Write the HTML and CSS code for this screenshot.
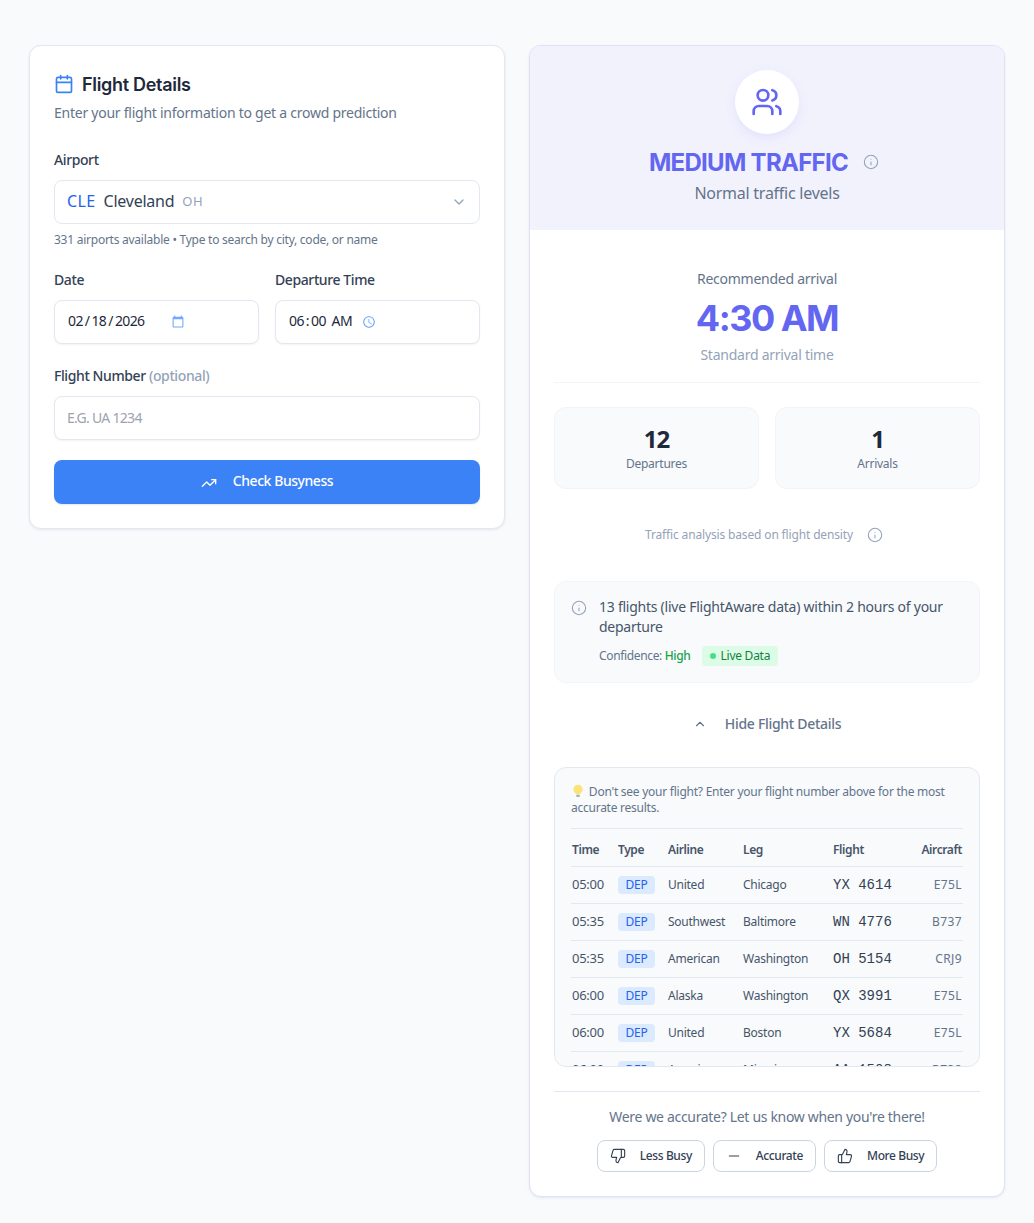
FILE: index.html
```html
<!DOCTYPE html>
<html>
    <head>
        <title>Flight Busyness</title>
        <link rel="stylesheet" href="styles.css">
    </head>
    <body>
        <div class="page">
            <div class="card form_card">
                <div class="card_title">
                    <svg class="icon title_icon" viewBox="0 0 24 24"><path d="M8 2v4"/><path d="M16 2v4"/><rect x="3" y="4" width="18" height="18" rx="2"/><path d="M3 10h18"/></svg>
                    <h2>Flight Details</h2>
                </div>
                <p class="card_sub">Enter your flight information to get a crowd prediction</p>

                <label class="field_label">Airport</label>
                <div class="control airport">
                    <span class="code">CLE</span>
                    <span class="city">Cleveland</span>
                    <span class="state">OH</span>
                    <svg class="icon chevron" viewBox="0 0 24 24"><path d="m6 9 6 6 6-6"/></svg>
                </div>
                <p class="helper">331 airports available • Type to search by city, code, or name</p>

                <div class="two_col">
                    <div>
                        <label class="field_label">Date</label>
                        <div class="control native_box"><input class="native date" type="date" value="2026-02-18"></div>
                    </div>
                    <div>
                        <label class="field_label">Departure Time</label>
                        <div class="control native_box"><input class="native time_input" type="time" value="06:00"></div>
                    </div>
                </div>

                <label class="field_label">Flight Number <span class="optional">(optional)</span></label>
                <input class="control flight_input" type="text" placeholder="E.G. UA 1234">

                <button class="submit">
                    <svg class="icon" viewBox="0 0 24 24"><path d="M22 7 13.5 15.5 8.5 10.5 2 17"/><path d="M16 7h6v6"/></svg>
                    Check Busyness
                </button>
            </div>

            <div class="card result_card">
                <div class="traffic">
                    <div class="traffic_circle">
                        <svg class="icon" viewBox="0 0 24 24"><path d="M16 21v-2a4 4 0 0 0-4-4H6a4 4 0 0 0-4 4v2"/><circle cx="9" cy="7" r="4"/><path d="M22 21v-2a4 4 0 0 0-3-3.87"/><path d="M16 3.13a4 4 0 0 1 0 7.75"/></svg>
                    </div>
                    <div class="traffic_title">
                        <h2>MEDIUM TRAFFIC</h2>
                        <svg class="icon info" viewBox="0 0 24 24"><circle cx="12" cy="12" r="10"/><path d="M12 16v-4"/><path d="M12 8h.01"/></svg>
                    </div>
                    <p class="traffic_sub">Normal traffic levels</p>
                </div>

                <div class="result_body">
                    <div class="arrival">
                        <p class="arrival_label">Recommended arrival</p>
                        <p class="arrival_time">4:30 AM</p>
                        <p class="arrival_note">Standard arrival time</p>
                    </div>

                    <div class="stats">
                        <div class="stat"><div class="stat_num">12</div><div class="stat_label">Departures</div></div>
                        <div class="stat"><div class="stat_num">1</div><div class="stat_label">Arrivals</div></div>
                    </div>

                    <div class="density">
                        <span>Traffic analysis based on flight density</span>
                        <svg class="icon info" viewBox="0 0 24 24"><circle cx="12" cy="12" r="10"/><path d="M12 16v-4"/><path d="M12 8h.01"/></svg>
                    </div>

                    <div class="summary">
                        <svg class="icon info" viewBox="0 0 24 24"><circle cx="12" cy="12" r="10"/><path d="M12 16v-4"/><path d="M12 8h.01"/></svg>
                        <div>
                            <p class="summary_text">13 flights (live FlightAware data) within 2 hours of your departure</p>
                            <div class="confidence">
                                <span class="conf_text">Confidence: <b>High</b></span>
                                <span class="live"><i></i>Live Data</span>
                            </div>
                        </div>
                    </div>

                    <div class="toggle">
                        <svg class="icon" viewBox="0 0 24 24"><path d="m18 15-6-6-6 6"/></svg>
                        <span>Hide Flight Details</span>
                    </div>

                    <div class="flights">
                        <p class="flights_tip">
                            <svg class="bulb" viewBox="0 0 14 14"><path d="M7 .8a4.6 4.6 0 0 0-2.7 8.3c.5.4.7.9.8 1.5h3.800c.1-.6.3-1.100.8-1.500A4.600 4.600 0 0 0 7 .8Z" fill="#fbe27a"/><rect x="5.200" y="10.800" width="3.600" height="2.200" rx=".7" fill="#a9b2bd"/></svg>
                            Don't see your flight? Enter your flight number above for the most accurate results.
                        </p>
                        <table>
                            <thead>
                                <tr><th>Time</th><th>Type</th><th>Airline</th><th>Leg</th><th>Flight</th><th class="right">Aircraft</th></tr>
                            </thead>
                            <tbody>
                                <tr><td class="time">05:00</td><td><span class="dep">DEP</span></td><td>United</td><td>Chicago</td><td class="num">YX 4614</td><td class="craft">E75L</td></tr>
                                <tr><td class="time">05:35</td><td><span class="dep">DEP</span></td><td>Southwest</td><td>Baltimore</td><td class="num">WN 4776</td><td class="craft">B737</td></tr>
                                <tr><td class="time">05:35</td><td><span class="dep">DEP</span></td><td>American</td><td>Washington</td><td class="num">OH 5154</td><td class="craft">CRJ9</td></tr>
                                <tr><td class="time">06:00</td><td><span class="dep">DEP</span></td><td>Alaska</td><td>Washington</td><td class="num">QX 3991</td><td class="craft">E75L</td></tr>
                                <tr><td class="time">06:00</td><td><span class="dep">DEP</span></td><td>United</td><td>Boston</td><td class="num">YX 5684</td><td class="craft">E75L</td></tr>
                                <tr><td class="time">06:00</td><td><span class="dep">DEP</span></td><td>American</td><td>Miami</td><td class="num">AA 1508</td><td class="craft">B738</td></tr>
                            </tbody>
                        </table>
                    </div>

                    <div class="feedback">
                        <p>Were we accurate? Let us know when you're there!</p>
                        <div class="feedback_btns">
                            <button class="fb"><svg class="icon" viewBox="0 0 24 24"><path d="M17 14V2"/><path d="M9 18.120 10 14H4.170a2 2 0 0 1-1.920-2.560l2.330-8A2 2 0 0 1 6.500 2H20a2 2 0 0 1 2 2v8a2 2 0 0 1-2 2h-2.760a2 2 0 0 0-1.790 1.110L12 22a3.130 3.130 0 0 1-3-3.880Z"/></svg>Less Busy</button>
                            <button class="fb"><svg class="icon" viewBox="0 0 24 24"><path d="M5 12h14"/></svg>Accurate</button>
                            <button class="fb"><svg class="icon" viewBox="0 0 24 24"><path d="M7 10v12"/><path d="M15 5.880 14 10h5.830a2 2 0 0 1 1.920 2.560l-2.330 8A2 2 0 0 1 17.500 22H4a2 2 0 0 1-2-2v-8a2 2 0 0 1 2-2h2.760a2 2 0 0 0 1.790-1.110L12 2a3.130 3.130 0 0 1 3 3.880Z"/></svg>More Busy</button>
                        </div>
                    </div>
                </div>
            </div>
        </div>
    </body>
</html>
```

FILE: styles.css
```css
* {
    box-sizing: border-box;
}
body {
    margin: 0px;
    background: #f8fafc;
    color: #1e293b;
    font-family: "Noto Sans", sans-serif;
    letter-spacing: -0.25px;
}
p, h2 {
    margin: 0px;
}
.icon {
    fill: none;
    stroke: currentColor;
    stroke-width: 2;
    stroke-linecap: round;
    stroke-linejoin: round;
    flex: none;
}
.page {
    display: grid;
    grid-template-columns: 1fr 1fr;
    gap: 24px;
    align-items: start;
    width: 976px;
    margin: 0px auto;
    padding: 45px 0px 27px;
}
.card {
    background: white;
    border: 1px solid #e2e8f0;
    border-radius: 12px;
    box-shadow: 0px 1px 3px rgba(15, 23, 42, 0.08);
}

/* form */
.form_card {
    padding: 24px;
}
.card_title {
    display: flex;
    align-items: center;
    gap: 8px;
    height: 28px;
}
.card_title h2 {
    font-family: Inter, sans-serif;
    font-size: 18px;
    font-weight: 600;
    color: #1e293b;
    letter-spacing: -0.3px;
}
.title_icon {
    width: 20px;
    height: 20px;
    color: #3b82f6;
}
.card_sub {
    margin-top: 5px;
    margin-bottom: 27px;
    font-size: 14px;
    line-height: 20px;
    color: #64748b;
}
.field_label {
    display: block;
    margin-top: 22px;
    margin-bottom: 10px;
    font-size: 14px;
    line-height: 20px;
    font-weight: 500;
    color: #334155;
    letter-spacing: -0.4px;
}
.optional {
    color: #94a3b8;
}
.control {
    display: flex;
    align-items: center;
    width: 100%;
    height: 44px;
    padding: 0px 12px;
    background: white;
    border: 1px solid #e2e8f0;
    border-radius: 8px;
    box-shadow: 0px 1px 2px rgba(15, 23, 42, 0.05);
    font-size: 14px;
    color: #1e293b;
}
.airport {
    box-shadow: none;
    padding-bottom: 2px;
}
.code {
    font-size: 16px;
    color: #2563eb;
    margin-right: 8px;
    letter-spacing: 0.4px;
}
.city {
    font-size: 16px;
    color: #334155;
    margin-right: 8px;
    letter-spacing: -0.25px;
}
.state {
    font-size: 13px;
    color: #94a3b8;
    letter-spacing: 0.5px;
}
.chevron {
    width: 16px;
    height: 16px;
    margin-left: auto;
    margin-top: 2px;
    color: #94a3b8;
}
.helper {
    margin-top: 8px;
    font-size: 12px;
    line-height: 16px;
    color: #64748b;
}
.two_col {
    display: grid;
    grid-template-columns: 1fr 1fr;
    gap: 16px;
}
.native_box {
    padding-bottom: 4px;
}
.native {
    border: 0px;
    padding: 0px;
    background: none;
    outline: none;
    font-family: "Noto Sans", sans-serif;
    font-size: 14px;
    letter-spacing: -0.6px;
    color: #1e293b;
}
.native::-webkit-datetime-edit-text {
    padding: 0px 1px;
}
.native::-webkit-calendar-picker-indicator {
    filter: invert(38%) sepia(90%) saturate(2000%) hue-rotate(205deg) brightness(105%);
    opacity: 0.7;
    margin: 4px 0px 0px;
}
.date {
    width: 120px;
}
.time_input {
    width: 92px;
}
.flight_input {
    font-family: "Noto Sans", sans-serif;
    letter-spacing: -0.7px;
    padding-bottom: 2px;
}
.flight_input::placeholder {
    color: #9ca3af;
}
.submit {
    display: flex;
    align-items: center;
    justify-content: center;
    gap: 16px;
    width: 100%;
    height: 44px;
    margin-top: 20px;
    padding-bottom: 4px;
    background: #3b82f6;
    color: white;
    border: 0px;
    border-radius: 8px;
    box-shadow: 0px 1px 2px rgba(15, 23, 42, 0.1);
    font-family: "Noto Sans", sans-serif;
    font-size: 14px;
    font-weight: 500;
    letter-spacing: -0.45px;
}
.submit svg {
    width: 16px;
    height: 16px;
    margin-top: 4px;
}

/* result */
.result_card {
    overflow: hidden;
    border-color: #e0e0fb;
}
.traffic {
    height: 184px;
    padding-top: 24px;
    background: #f2f2fd;
    text-align: center;
}
.traffic_circle {
    display: flex;
    align-items: center;
    justify-content: center;
    width: 64px;
    height: 64px;
    margin: 0px auto;
    background: white;
    border-radius: 50%;
    box-shadow: 0px 4px 12px rgba(99, 102, 241, 0.1);
    color: #6366f1;
}
.traffic_circle svg {
    width: 32px;
    height: 32px;
}
.traffic_title {
    display: flex;
    align-items: center;
    justify-content: center;
    gap: 15px;
    margin-top: 12px;
    padding-right: 6px;
    height: 32px;
}
.traffic_title h2 {
    font-family: Inter, sans-serif;
    font-size: 24px;
    font-weight: 700;
    color: #6366f1;
    letter-spacing: -0.7px;
}
.info {
    width: 16px;
    height: 16px;
    color: #94a3b8;
    stroke-width: 1.6;
}
.traffic_sub {
    margin-top: 3px;
    font-size: 16px;
    line-height: 24px;
    color: #64748b;
}
.result_body {
    padding: 0px 24px 24px;
}
.arrival {
    padding-top: 39px;
    padding-bottom: 17px;
    border-bottom: 1px solid #f1f5f9;
    text-align: center;
}
.arrival_label {
    font-size: 14px;
    line-height: 20px;
    color: #64748b;
}
.arrival_time {
    margin-top: 9px;
    font-family: Inter, sans-serif;
    font-size: 36px;
    line-height: 40px;
    font-weight: 700;
    color: #6366f1;
    letter-spacing: -1.5px;
}
.arrival_note {
    margin-top: 7px;
    font-size: 14px;
    line-height: 20px;
    color: #94a3b8;
}
.stats {
    display: grid;
    grid-template-columns: 1fr 1fr;
    gap: 16px;
    margin-top: 24px;
}
.stat {
    height: 82px;
    padding-top: 16px;
    background: #f8fafc;
    border: 1px solid #f1f5f9;
    border-radius: 12px;
    text-align: center;
}
.stat_num {
    font-size: 24px;
    line-height: 30px;
    font-weight: 700;
    color: #1e293b;
    letter-spacing: -1px;
}
.stat_label {
    font-size: 12px;
    line-height: 16px;
    margin-top: 2px;
    color: #64748b;
}
.density {
    display: flex;
    align-items: center;
    justify-content: center;
    gap: 14px;
    margin-top: 38px;
    padding-right: 6px;
    height: 16px;
    font-size: 12px;
    letter-spacing: -0.15px;
    color: #94a3b8;
}
.density span {
    margin-top: -2px;
}
.summary {
    display: flex;
    gap: 12px;
    margin-top: 38px;
    height: 102px;
    padding: 15px 16px;
    background: #f8fafc;
    border: 1px solid #f1f5f9;
    border-radius: 12px;
}
.summary .info {
    margin-top: 3px;
}
.summary_text {
    font-size: 14px;
    line-height: 20px;
    color: #475569;
}
.confidence {
    display: flex;
    align-items: center;
    gap: 11px;
    margin-top: 9px;
    font-size: 12px;
    letter-spacing: -0.35px;
    color: #64748b;
}
.conf_text {
    margin-top: -2px;
}
.confidence b {
    font-weight: 500;
    color: #16a34a;
}
.live {
    display: inline-flex;
    align-items: center;
    gap: 5px;
    height: 20px;
    padding: 0px 8px 1px;
    background: #dcfce7;
    border-radius: 4px;
    letter-spacing: -0.25px;
    color: #15803d;
}
.live i {
    width: 6px;
    height: 6px;
    margin-top: 1px;
    background: #4ade80;
    border-radius: 50%;
}
.toggle {
    display: flex;
    align-items: center;
    justify-content: center;
    gap: 18px;
    height: 20px;
    margin-top: 31px;
    font-size: 14px;
    font-weight: 500;
    letter-spacing: -0.3px;
    color: #64748b;
}
.toggle span {
    margin-top: -2px;
}
.toggle svg {
    width: 14px;
    height: 14px;
}
.flights {
    height: 300px;
    margin-top: 33px;
    padding: 16px;
    overflow: hidden;
    background: #f8fafc;
    border: 1px solid #e2e8f0;
    border-radius: 12px;
}
.flights_tip {
    font-size: 12px;
    line-height: 16px;
    color: #64748b;
    padding-bottom: 12px;
    border-bottom: 1px solid #e2e8f0;
}
.bulb {
    width: 14px;
    height: 14px;
    margin-right: 1px;
    vertical-align: -2px;
}
table {
    width: 100%;
    border-collapse: collapse;
    table-layout: fixed;
    font-size: 12px;
}
th {
    height: 37px;
    padding: 4px 1px 0px;
    text-align: left;
    font-weight: 600;
    letter-spacing: -0.4px;
    color: #475569;
    border-bottom: 1px solid #e2e8f0;
}
td {
    height: 37px;
    padding: 0px 1px;
    color: #475569;
    border-bottom: 1px solid #e2e8f0;
}
th:nth-child(1) { width: 46px; }
th:nth-child(2) { width: 50px; }
th:nth-child(3) { width: 75px; }
th:nth-child(4) { width: 90px; }
th:nth-child(6) { width: 50px; }
.right {
    text-align: right;
}
.time {
    font-size: 13px;
    padding-bottom: 2px;
}
.dep {
    display: block;
    width: 37px;
    height: 18px;
    background: #dbeafe;
    border-radius: 4px;
    color: #2563eb;
    line-height: 18px;
    text-align: center;
}
.num {
    font-family: "Liberation Mono", monospace;
    font-size: 14px;
    letter-spacing: 0px;
    color: #334155;
}
.craft {
    text-align: right;
    letter-spacing: 0.4px;
    color: #64748b;
}
.feedback {
    margin-top: 24px;
    padding-top: 15px;
    border-top: 1px solid #e2e8f0;
    text-align: center;
    font-size: 14px;
    line-height: 20px;
    letter-spacing: -0.32px;
    color: #64748b;
}
.feedback_btns {
    display: flex;
    justify-content: center;
    gap: 8px;
    margin-top: 13px;
}
.fb {
    display: flex;
    align-items: center;
    gap: 14px;
    height: 32px;
    padding: 0px 12px 1px;
    background: white;
    border: 1px solid #cbd5e1;
    border-radius: 8px;
    font-family: "Noto Sans", sans-serif;
    font-size: 12px;
    font-weight: 500;
    letter-spacing: -0.4px;
    color: #334155;
}
.fb svg {
    width: 16px;
    height: 16px;
    stroke-width: 1.7;
}
```
